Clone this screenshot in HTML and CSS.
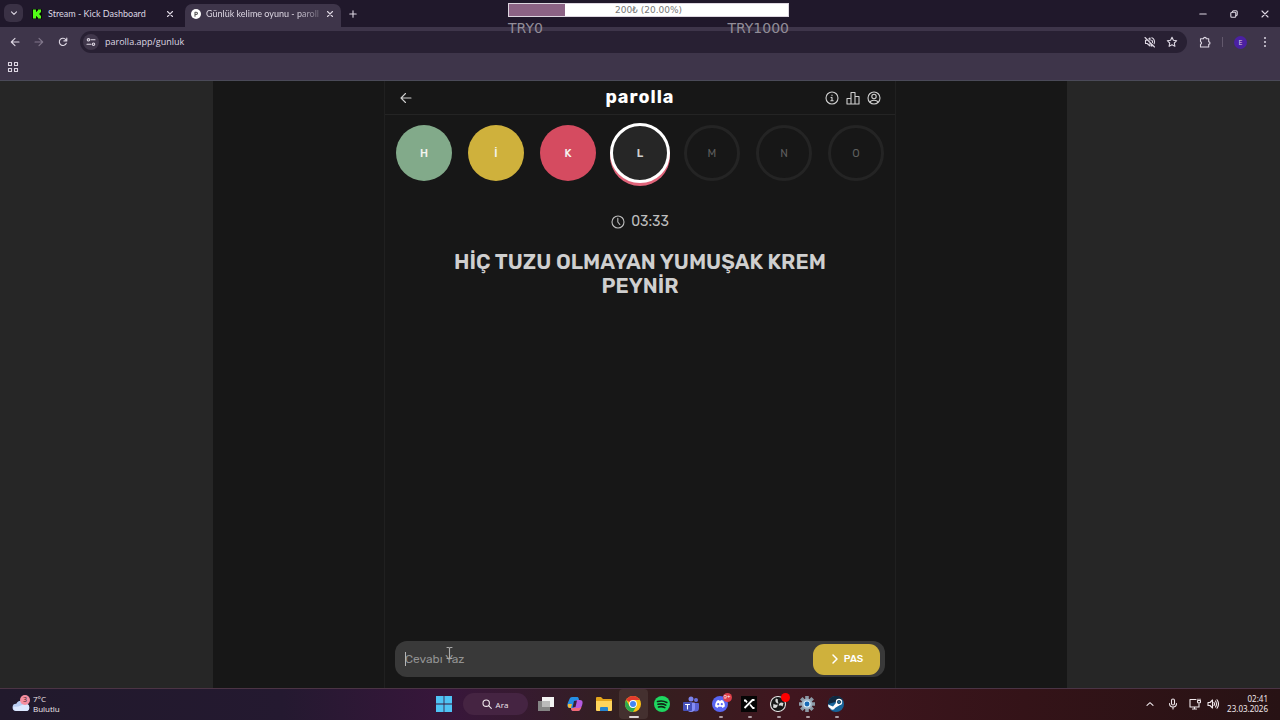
FILE: index.html
```html
<!DOCTYPE html>
<html lang="tr">
<head>
<meta charset="utf-8">
<meta name="viewport" content="width=device-width, initial-scale=1">
<title>Günlük kelime oyunu - parolla</title>
<link rel="stylesheet" href="styles.css">
</head>
<body>
<div class="desktop">
  <header class="chrome">
    <div class="tabstrip">
      <button class="tab-search" aria-label="Sekmelerde ara"><svg viewBox="0 0 10 10" width="10" height="10"><path d="M2.5 3.8 5 6.3l2.5-2.5"/></svg></button>
      <div class="tab">
        <svg class="favicon" viewBox="0 0 10 10"><path fill="#0b0b0b" stroke="none" d="M0 0h10v10H0z"/><path fill="#53fc18" stroke="none" d="M1 .5h3v2.300h1V1.700h1V.5h3v3H8v1H7v1h1v1h1v3H6V8.300H5V7.200H4v2.300H1z"/></svg>
        <span class="tab-title">Stream - Kick Dashboard</span>
        <button class="icon-btn tab-close" aria-label="Kapat"><svg viewBox="0 0 8 8" width="8" height="8"><path d="m1.500 1.500 5 5m0-5-5 5"/></svg></button>
      </div>
      <div class="tab tab-active">
        <svg class="favicon" viewBox="0 0 10 10"><circle cx="5" cy="5" r="5" fill="#fff" stroke="none"/><path stroke="#555" d="M4 7.200V3.200h1.300a1.100 1.100 0 0 1 0 2.300H4"/></svg>
        <span class="tab-title tab-fade">Günlük kelime oyunu - parolla</span>
        <button class="icon-btn tab-close" aria-label="Kapat"><svg viewBox="0 0 8 8" width="8" height="8"><path d="m1.500 1.500 5 5m0-5-5 5"/></svg></button>
      </div>
      <button class="icon-btn new-tab" aria-label="Yeni sekme"><svg viewBox="0 0 8 8" width="8" height="8"><path d="M4 .8v6.400M.8 4h6.400"/></svg></button>
      <div class="window-controls">
        <button class="icon-btn" aria-label="Küçült"><svg viewBox="0 0 8 8" width="8" height="8"><path d="M.8 4h6.400"/></svg></button>
        <button class="icon-btn" aria-label="Geri yükle"><svg viewBox="0 0 8 8" width="8" height="8"><rect x=".8" y="2.200" width="5" height="5" rx="1"/><path d="M2.500 2V1.800a1 1 0 0 1 1-1h2.700a1 1 0 0 1 1 1v2.700a1 1 0 0 1-1 1H6"/></svg></button>
        <button class="icon-btn" aria-label="Pencereyi kapat"><svg viewBox="0 0 8 8" width="8" height="8"><path d="m1 1 6 6m0-6-6 6"/></svg></button>
      </div>
    </div>
    <div class="toolbar">
      <button class="icon-btn nav-btn" aria-label="Geri"><svg viewBox="0 0 10 10" width="10" height="10"><path d="M9 5H1.500M5 1.300 1.300 5 5 8.700"/></svg></button>
      <button class="icon-btn nav-btn nav-off" aria-label="İleri"><svg viewBox="0 0 10 10" width="10" height="10"><path d="M1 5h7.500M5 1.300 8.700 5 5 8.700"/></svg></button>
      <button class="icon-btn nav-btn" aria-label="Yenile"><svg viewBox="0 0 10 10" width="10" height="10"><path d="M8.300 6.200A3.600 3.600 0 1 1 7.800 2.700L8.600 3.700M8.800 1v2.900H5.900"/></svg></button>
      <div class="omnibox">
        <button class="site-info" aria-label="Site bilgileri"><svg viewBox="0 0 10 10" width="10" height="10"><circle cx="2.500" cy="2.800" r="1.200"/><path d="M5 2.800h4M1 7.200h4"/><circle cx="7.500" cy="7.200" r="1.200"/></svg></button>
        <input class="url" type="text" value="parolla.app/gunluk" aria-label="Adres">
        <button class="icon-btn" aria-label="Ses kapalı"><svg viewBox="0 0 12 12" width="12" height="12"><path d="M1 1.500 10.500 11M3.500 4.200H1.500v3.300h1.700L6 10V7M4.800 3 6 2v2.200M7.700 4.300a2 2 0 0 1 .8 2.200M7.800 1.800a4.400 4.400 0 0 1 2.300 6M7.500 8.800v1.300l1-.4"/></svg></button>
        <button class="icon-btn" aria-label="Yer işareti"><svg viewBox="0 0 12 12" width="12" height="12"><path d="m6 1.300 1.400 3 3.300.4-2.400 2.300.6 3.300L6 8.700l-2.900 1.600.6-3.300L1.300 4.700l3.300-.4z"/></svg></button>
      </div>
      <button class="icon-btn ext" aria-label="Uzantılar"><svg viewBox="0 0 12 12" width="12" height="12"><path d="M1.500 2.800h3a1.400 1.400 0 0 1 2.800 0h2.400v2.900a1.300 1.300 0 0 1 0 2.600V11H1.500V8.300a1.400 1.400 0 0 0 0-2.700z"/></svg></button>
      <span class="divider"></span>
      <button class="avatar" aria-label="Profil">E</button>
      <button class="icon-btn menu" aria-label="Menü"><svg viewBox="0 0 10 12" width="10" height="12"><g fill="currentColor" stroke="none"><circle cx="5" cy="2" r="1"/><circle cx="5" cy="6" r="1"/><circle cx="5" cy="10" r="1"/></g></svg></button>
    </div>
    <div class="bookmarks">
      <button class="icon-btn" aria-label="Uygulamalar"><svg viewBox="0 0 12 12" width="12" height="12"><path d="M1.500 1.500h3v3h-3zM7.500 1.500h3v3h-3zM1.500 7.500h3v3h-3zM7.500 7.500h3v3h-3z"/></svg></button>
    </div>
  </header>

  <main class="viewport">
    <div class="site">
      <section class="game">
        <div class="game-head">
          <div class="head-left"><button class="icon-btn" aria-label="Geri dön"><svg viewBox="0 0 14 14" width="14" height="14"><path d="M12 7H2M6.500 2.500 2 7l4.500 4.500"/></svg></button></div>
          <h1 class="logo">parolla</h1>
          <div class="head-right">
            <button class="icon-btn" aria-label="Bilgi"><svg viewBox="0 0 14 14" width="14" height="14"><circle cx="7" cy="7" r="6"/><path d="M6 6.500h1v3.200M5.800 9.800h2.400M7 4v.6"/></svg></button>
            <button class="icon-btn" aria-label="İstatistikler"><svg viewBox="0 0 14 14" width="14" height="14"><path d="M1 7.500h4V13H1zM5 1.500h4V13H5zM9 5.500h4V13H9z"/></svg></button>
            <button class="icon-btn" aria-label="Hesap"><svg viewBox="0 0 14 14" width="14" height="14"><circle cx="7" cy="7" r="6"/><circle cx="7" cy="5.500" r="2.200"/><path d="M3.300 11.500C3.300 9.800 4.500 9.200 7 9.200s3.700.6 3.700 2.300"/></svg></button>
          </div>
        </div>
        <ol class="letters">
          <li class="letter letter-right">H</li>
          <li class="letter letter-passed">İ</li>
          <li class="letter letter-wrong">K</li>
          <li class="letter letter-current">L</li>
          <li class="letter">M</li>
          <li class="letter">N</li>
          <li class="letter">O</li>
        </ol>
        <div class="timer"><svg viewBox="0 0 14 14" width="14" height="14"><circle cx="7" cy="7" r="6"/><path d="M6.800 3.300V7l2 2.500"/></svg><span>03:33</span></div>
        <h2 class="question">HİÇ TUZU OLMAYAN YUMUŞAK KREM PEYNİR</h2>
        <form class="answer">
          <span class="caret"></span>
          <input class="answer-input" type="text" placeholder="Cevabı Yaz" aria-label="Cevabı Yaz">
          <button class="pass" type="button"><svg viewBox="0 0 10 12" width="10" height="12"><path d="m3 2 4 4-4 4"/></svg>PAS</button>
          <svg class="pointer" viewBox="0 0 7 14" width="7" height="14"><path d="M1 1.500h1.500q1 0 1 1 0-1 1-1H6M3.500 2.500v9M1 12.500h1.500q1 0 1-1 0 1 1 1H6"/></svg>
        </form>
      </section>
    </div>
  </main>

  <footer class="taskbar">
    <button class="weather">
      <span class="weather-icon"><svg viewBox="0 0 18 18" width="18" height="18"><path fill="#b9cdf2" stroke="none" d="M4 16a3.600 3.600 0 0 1 .3-7.200A5 5 0 0 1 13.500 9a3.500 3.500 0 0 1 .5 7z"/><path fill="#dce8ff" stroke="none" d="M4 16a3.600 3.600 0 0 1-2.500-4.500C6 13 10 9 13.500 9a3.500 3.500 0 0 1 .5 7z"/></svg><span class="weather-badge">3</span></span>
      <span class="weather-text"><b>7°C</b><span>Bulutlu</span></span>
    </button>
    <nav class="apps" aria-label="Uygulamalar">
      <button class="app" aria-label="Başlat"><svg viewBox="0 0 16 16"><path fill="#4fc3f5" stroke="none" d="M0 0h7.600v7.600H0zM8.400 0H16v7.600H8.400zM0 8.400h7.600V16H0zM8.400 8.400H16V16H8.400z"/></svg></button>
      <button class="search"><svg viewBox="0 0 10 10" width="10" height="10"><circle cx="4.200" cy="4.200" r="3.200"/><path d="m6.600 6.600 2.700 2.700"/></svg>Ara</button>
      <button class="app" aria-label="Görev görünümü"><svg viewBox="0 0 16 16"><path fill="#f3f3f3" stroke="none" d="M4 1h12v10H4z"/><path fill="#858585" stroke="none" d="M0 5h12v10H0z"/><path fill="#bbb" stroke="none" d="M4 5h8v6H4z"/></svg></button>
      <button class="app" aria-label="Copilot"><svg viewBox="0 0 16 16"><g stroke="none"><path fill="#258fe5" d="M5 1h5c1 0 1.500.7 1.800 1.700L12 4H9.500L7 12H3C0 12 0 9 1 6.500L2.500 3C3 1.700 3.800 1 5 1z"/><path fill="#f0b83d" d="M1 8h4l-1 4H3C.8 12 .5 10 1 8z"/><path fill="#b45ae0" d="M11 15H6c-1 0-1.500-.7-1.800-1.700L4 12h2.500L9 4h4c3 0 3 3 2 5.500L13.500 13c-.5 1.300-1.300 2-2.500 2z"/><path fill="#f16a74" d="M4 12h8l2.500-1-1 2c-.5 1.300-1.300 2-2.500 2H6c-1 0-1.700-1-2-3z"/><path fill="#34203a" d="m7 5 3-.5L8.500 11l-3 .5z"/></g></svg></button>
      <button class="app" aria-label="Dosya Gezgini"><svg viewBox="0 0 16 16"><g stroke="none"><path fill="#e4a51c" d="M0 2q0-1 1-1h4l2 2h8q1 0 1 1v4H0z"/><path fill="#ffd45c" d="M0 5h16v9q0 1-1 1H1q-1 0-1-1z"/><path fill="#2684cf" d="M4 15v-3q0-1 1-1h6q1 0 1 1v3z"/></g></svg></button>
      <button class="app app-open app-focus" aria-label="Chrome"><svg viewBox="0 0 16 16"><g stroke="none"><circle cx="8" cy="8" r="8" fill="#fbc116"/><path fill="#e33b2e" d="M8 8 1.100 4A8 8 0 0 1 14.900 4H8z"/><path fill="#2da94f" d="M1.100 4A8 8 0 0 0 8 16l3.500-6L8 8 4.500 10z"/><circle cx="8" cy="8" r="3.900" fill="#fff"/><circle cx="8" cy="8" r="3" fill="#4285f4"/></g></svg></button>
      <button class="app" aria-label="Spotify"><svg viewBox="0 0 16 16"><circle cx="8" cy="8" r="8" fill="#1ed760" stroke="none"/><path stroke="#102516" stroke-width="1.600" d="M3.500 5.500q5-1.500 9.300 1M4 8.300q4.300-1.200 7.800.8M4.500 11q3.500-1 6.300.6"/></svg></button>
      <button class="app" aria-label="Teams"><svg viewBox="0 0 16 16"><g stroke="none"><circle cx="8" cy="3" r="2.500" fill="#7b83eb"/><circle cx="13" cy="4" r="2" fill="#6a70dd"/><path fill="#5b61d1" d="M9 7h6q1 0 1 1v4a3.500 3.500 0 0 1-7 0z"/><path fill="#858df5" d="M4 6.500h7q1 0 1 1V12a4 4 0 0 1-8 0z"/><rect y="6" width="9" height="9" rx="1" fill="#4650b8"/></g><path stroke="#fff" d="M2.500 8.500h4m-2 0V13"/></svg></button>
      <button class="app app-open" aria-label="Discord"><svg viewBox="0 0 16 16"><g stroke="none"><circle cx="8" cy="8" r="8" fill="#5865f2"/><path fill="#fff" d="M5 4.500 7 4l.4.800h1.200L9 4l2 .5c1.400 1.800 2 3.800 1.800 6L10.500 12l-.8-1.200H6.300L5.500 12l-2.300-1.500c-.2-2.200.4-4.200 1.800-6z"/><circle cx="6.200" cy="8.200" r="1.100" fill="#5865f2"/><circle cx="9.800" cy="8.200" r="1.100" fill="#5865f2"/></g></svg><span class="badge">9+</span></button>
      <button class="app app-open" aria-label="Kick"><svg viewBox="0 0 16 16"><path fill="#050505" stroke="none" d="M0 0h16v16H0z"/><path stroke="#fff" stroke-width="1.800" stroke-linecap="butt" stroke-linejoin="miter" d="M13.500 4h-2L3.500 12M9 8.500l3 3.500h1.500M3 4.500h1.500L6 6.300"/></svg></button>
      <button class="app app-open" aria-label="OBS"><svg viewBox="0 0 16 16"><circle cx="8" cy="8" r="7.500" fill="#161616" stroke="#ddd"/><path fill="#d7d7d7" stroke="none" d="M6 2.500C4.500 5 6 7.500 8.500 7.500c-.5-2-1-2.500-.5-4zM13.500 7c-2.700-1.500-5 .3-4.700 2.800 2-.5 2.600-.3 3.800.8zM3 11.500c2.800 1.300 5-.6 4.700-3C5.600 9 5 8.700 3.500 7.800z"/></svg><span class="badge badge-dot"></span></button>
      <button class="app app-open" aria-label="Ayarlar"><svg viewBox="0 0 16 16"><path stroke="#8b99a5" stroke-width="3.600" stroke-linecap="butt" d="M8 0v16M0 8h16M2.300 2.300l11.400 11.400M13.700 2.300 2.300 13.700"/><circle cx="8" cy="8" r="5.400" fill="#9fb0bf" stroke="none"/><circle cx="8" cy="8" r="3" fill="#1769b5" stroke="#d7ecfa"/></svg></button>
      <button class="app app-open" aria-label="Steam"><svg viewBox="0 0 16 16"><g stroke="none"><circle cx="8" cy="8" r="8" fill="#17649a"/><path fill="#10283f" d="M0 8a8 8 0 0 1 15-4z"/><path fill="#fff" d="m0 8.500 5 2 3.500-4.300 3 3L7 12a2.500 2.500 0 0 1-4.500.5L.5 11z"/><circle cx="11" cy="6" r="3.200" fill="#fff"/></g><circle cx="11" cy="6" r="1.700" fill="#23658f" stroke="#173d5c" stroke-width=".8"/></svg></button>
    </nav>
    <div class="tray">
      <button class="icon-btn tray-up" aria-label="Gizli simgeler"><svg viewBox="0 0 10 10" width="10" height="10"><path d="M2 6.300 5 3.700l3 2.600"/></svg></button>
      <button class="icon-btn tray-mic" aria-label="Mikrofon"><svg viewBox="0 0 12 12" width="12" height="12"><rect x="4.500" y="1" width="3" height="6" rx="1.500"/><path d="M2.500 5.500a3.500 3.500 0 0 0 7 0M6 9v2"/></svg></button>
      <button class="icon-btn" aria-label="Ağ"><svg viewBox="0 0 12 12" width="12" height="12"><path d="M7 1.500H1V9h9V6M3.500 11h4M5.500 9v2M9 1v1.500M11 1v1.500M8.500 2.500h3V4q0 1-1.500 1T8.500 4z"/></svg></button>
      <button class="icon-btn" aria-label="Ses"><svg viewBox="0 0 12 12" width="12" height="12"><path d="M1 4.500h2L5.500 2v8L3 7.500H1zM7 4.500q1 1.500 0 3M8.500 3q2 3 0 6M10 1.800q3 4.200 0 8.400"/></svg></button>
      <button class="clock"><span>02:41</span><span>23.03.2026</span></button>
    </div>
  </footer>

  <aside class="goal">
    <div class="goal-track"><div class="goal-fill" style="width:20%"></div><span class="goal-text">200₺ (20.00%)</span></div>
    <div class="goal-range"><span>TRY0</span><span>TRY1000</span></div>
  </aside>
</div>
</body>
</html>
```
FILE: styles.css
```css
* { box-sizing: border-box; }
body { margin: 0; font-family: "Open Sans", "Noto Sans", sans-serif; color: #ddd7e3; }
button, input { font: inherit; color: inherit; border: 0; background: none; padding: 0; margin: 0; outline: 0; }
svg { display: block; flex: none; fill: none; stroke: currentColor; stroke-width: 1.1; stroke-linecap: round; stroke-linejoin: round; }

.desktop { position: relative; display: flex; flex-direction: column; height: 100vh; overflow: hidden; }
.icon-btn { display: grid; place-items: center; min-width: 12px; flex: none; }

/* Browser frame */
.chrome { background: #3e354a; border-bottom: 1px solid #4a4a58; font-size: 9px; }
.tabstrip { display: flex; align-items: stretch; height: 27px; background: #20182b; padding: 4px 8px 0 4px; }
.tab-search { display: grid; place-items: center; width: 19px; height: 18px; border-radius: 6px; background: #3a3145; }
.tab { display: flex; align-items: center; gap: 6px; width: 162px; padding: 0 9px 4px; }
.tab-active { gap: 5px; background: #3e354a; border-radius: 7px 7px 0 0; width: 156px; padding: 0 5px 4px 6px; }
.favicon { width: 10px; height: 10px; }
.tab-title { flex: 1; min-width: 0; white-space: nowrap; font-family: Lato, "Open Sans", sans-serif; line-height: 14px; }
.tab-fade { mask-image: linear-gradient(90deg, #000 80%, #0004); }
.tab-close { width: 12px; }
.new-tab { width: 24px; padding-bottom: 4px; }
.window-controls { display: flex; gap: 19px; margin-left: auto; padding-bottom: 4px; padding-right: 1px; }
.toolbar { display: flex; align-items: center; height: 30px; padding: 0 10px 0 8px; border-radius: 7px 7px 0 0; }
.nav-btn { width: 14px; margin-right: 10px; }
.nav-off { color: #81778b; }
.omnibox { flex: 1; display: flex; align-items: center; gap: 10px; height: 22px; padding: 0 9px 0 3px; border-radius: 11px; background: #282033; }
.site-info { display: grid; place-items: center; width: 16px; height: 16px; border-radius: 50%; background: #40374b; margin-right: -4px; }
.url { flex: 1; min-width: 0; font-size: 9px; line-height: 14px; }
.ext { margin-left: 12px; }
.divider { width: 1px; height: 10px; background: #62586c; margin: 0 11px; }
.avatar { width: 13px; height: 13px; border-radius: 50%; background: #4b21a2; font-size: 7px; line-height: 13px; text-align: center; margin-right: 13px; }
.menu { min-width: 10px; }
.bookmarks { display: flex; align-items: center; height: 23px; padding: 0 7px 4px; }

/* Game page */
.viewport { flex: 1; min-height: 0; display: flex; background: #262626; color: #cfcfcf; font-family: Rubik, Inter, sans-serif; }
.site { width: 66.66%; margin: 0 auto; display: flex; justify-content: center; background: #171717; }
.game { width: 100%; max-width: 512px; display: flex; flex-direction: column; border: solid #202020; border-width: 0 1px; }
.game-head { display: grid; grid-template-columns: 1fr auto 1fr; align-items: center; height: 34px; padding: 0 14px; border-bottom: 1px solid #242424; }
.head-left { display: flex; }
.head-right { display: flex; justify-content: flex-end; gap: 7px; }
.logo { margin: 0; padding-bottom: 2px; color: #fff; font-size: 18px; line-height: 24px; font-weight: 700; letter-spacing: 1px; }
.letters { display: flex; justify-content: center; gap: 16px; margin: 0; padding: 10px 0; list-style: none; }
.letter { display: grid; place-items: center; flex: none; width: 56px; height: 56px; padding-top: 2px; border: 3px solid #242424; border-radius: 50%; color: #5e5e5e; font-size: 11px; line-height: 14px; font-weight: 400; }
.letter-right, .letter-passed, .letter-wrong { border: 0; color: #f4f4ee; font-weight: 500; }
.letter-right { background: #82aa8a; }
.letter-passed { background: #cfb13c; }
.letter-wrong { background: #d54b60; }
.letter-current { width: 60px; height: 60px; margin: -2px; border-color: #fff; background: #262626; color: #cfcfcf; font-weight: 600; box-shadow: 0 3px 0 #e0647a; }
.timer { display: flex; align-items: center; justify-content: center; gap: 6px; margin-top: 21px; font-size: 14px; line-height: 20px; font-weight: 400; color: #bdbdbd; }
.question { margin: 18px 50px 0; text-align: center; font-size: 21px; line-height: 24px; font-weight: 600; }
.answer { position: relative; display: flex; align-items: center; height: 36px; margin: auto 10px 11px; padding: 2px 5px 2px 10px; border-radius: 12px; background: #393939; }
.answer-input { flex: 1; min-width: 0; font-size: 12px; line-height: 18px; }
.answer-input::placeholder { color: #929292; opacity: 1; }
.caret { position: absolute; left: 10px; top: 11px; width: 1px; height: 14px; background: #b5b5b5; }
.pointer { position: absolute; left: 51px; top: 5px; color: #aaa; }
.pass { display: flex; align-items: center; justify-content: center; gap: 4px; width: 67px; height: 31px; border-radius: 11px; background: #cfb13c; color: #fff; font-size: 10px; font-weight: 500; }
.pass svg { stroke-width: 1.500; }

/* Taskbar */
.taskbar { display: grid; grid-template-columns: 1fr auto 1fr; align-items: center; height: 32px; padding-bottom: 1px; border-top: 1px solid #4b3445; background: linear-gradient(90deg, #21192c 0%, #241930 22%, #38163b 35%, #33201f 49%, #40161f 62%, #341318 80%, #271214 100%); font-size: 8px; color: #f0e8ec; }
.weather { display: flex; align-items: center; gap: 3px; padding-left: 12px; text-align: left; justify-self: start; }
.weather-icon { position: relative; }
.weather-badge { position: absolute; left: 8px; top: 0; width: 10px; height: 10px; border-radius: 50%; background: #f58ea0; color: #35202a; font-size: 7px; line-height: 10px; text-align: center; }
.weather-text { display: grid; line-height: 10px; }
.weather-text b { font-weight: 500; }
.apps { display: flex; align-items: center; }
.app { position: relative; display: grid; place-items: center; width: 29px; height: 30px; }
.app > svg { width: 16px; height: 16px; }
.app-focus { border-radius: 4px; background: #44302f; }
.app-open::after { content: ""; position: absolute; bottom: 1px; left: 13px; width: 4px; height: 2px; border-radius: 1px; background: #ad9da3; }
.app-focus::after { left: 10px; width: 10px; background: #ded5d5; }
.search { display: flex; align-items: center; justify-content: center; gap: 4px; width: 65px; height: 22px; margin: 0 4px; border-radius: 11px; background: #452442; }
.badge { position: absolute; right: 3px; top: 4px; width: 9px; height: 9px; border-radius: 50%; background: #dd3e4b; color: #fff; font-size: 6px; line-height: 9px; text-align: center; }
.badge-dot { background: #f00; }
.tray { display: flex; align-items: center; justify-content: flex-end; gap: 6px; padding-right: 12px; }
.tray-up { margin-right: 5px; }
.tray-mic { margin-right: 4px; }
.clock { display: grid; line-height: 10px; text-align: right; margin-left: 2px; font-family: "Noto Sans", sans-serif; }

/* Donation goal overlay */
.goal { position: absolute; top: 3px; left: 50%; width: 281px; margin-left: -132px; color: #928d98; font-family: "DejaVu Sans", sans-serif; }
.goal-track { position: relative; height: 14px; border: 1px solid #ddd6e0; background: #fff; }
.goal-fill { height: 100%; background: #8c6385; }
.goal-text { position: absolute; inset: 0; text-align: center; font-size: 9px; line-height: 13px; color: #777; }
.goal-range { display: flex; justify-content: space-between; font-size: 14px; line-height: 16px; padding-top: 3px; }
```
